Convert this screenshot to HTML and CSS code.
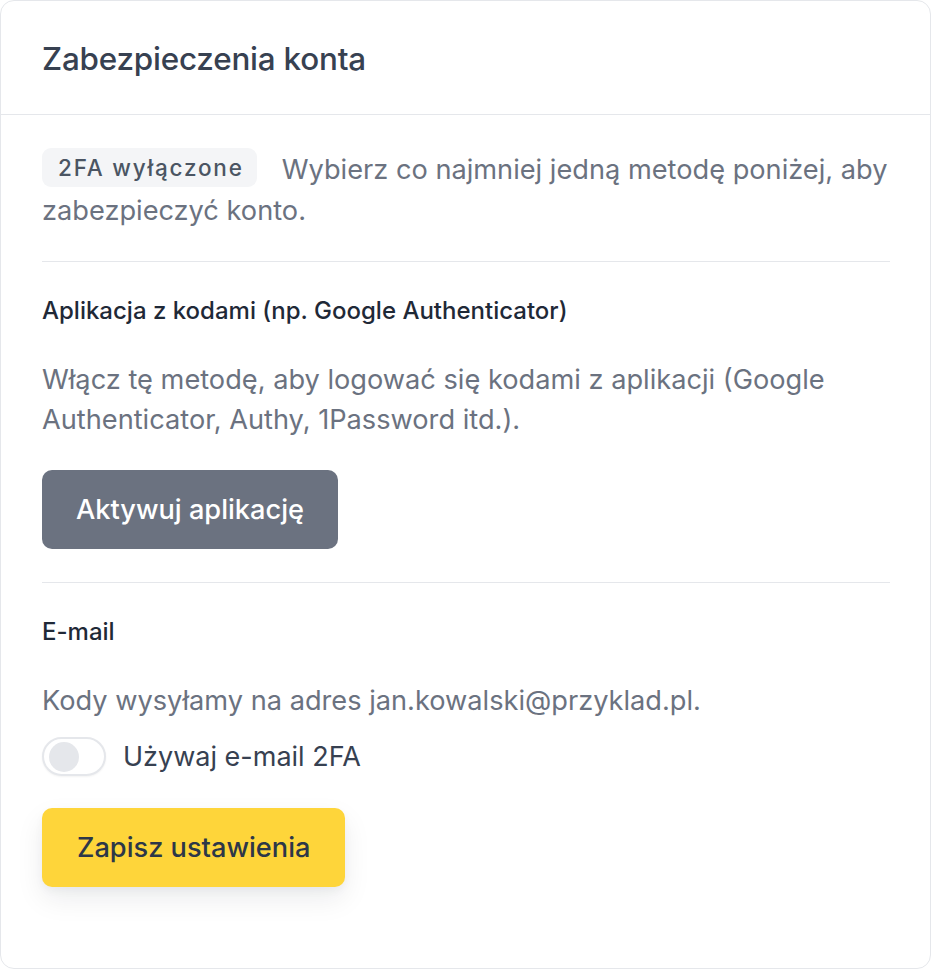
FILE: index.html
```html
<!DOCTYPE html>
<html lang="pl">
<head>
<meta charset="utf-8">
<title>Zabezpieczenia konta</title>
<link rel="stylesheet" href="styles.css">
</head>
<body>
<section class="card">
  <header class="card-header">
    <h1 class="card-title">Zabezpieczenia konta</h1>
  </header>
  <div class="card-body">
    <p class="intro"><span class="badge">2FA wyłączone</span>Wybierz co najmniej jedną metodę poniżej, aby zabezpieczyć konto.</p>

    <div class="method">
      <h2 class="method-title">Aplikacja z kodami (np. Google Authenticator)</h2>
      <p class="method-desc">Włącz tę metodę, aby logować się kodami z aplikacji (Google Authenticator, Authy, 1Password itd.).</p>
      <button class="btn btn-gray" type="button">Aktywuj aplikację</button>
    </div>

    <div class="method">
      <h2 class="method-title">E-mail</h2>
      <p class="method-desc">Kody wysyłamy na adres jan.kowalski@przyklad.pl.</p>
      <label class="toggle-row">
        <span class="toggle"><span class="knob"></span></span>
        <span class="toggle-label">Używaj e-mail 2FA</span>
      </label>
      <button class="btn btn-yellow" type="button">Zapisz ustawienia</button>
    </div>
  </div>
</section>
</body>
</html>
```

FILE: styles.css
```css
* { box-sizing: border-box; }
html, body { margin: 0; padding: 0; background: #ffffff; }
body {
  font-family: Inter, "Noto Sans", "Liberation Sans", sans-serif;
  color: #374151;
}
.card {
  width: 931px;
  height: 969px;
  border: 1px solid #e5e7eb;
  border-radius: 14px;
  background: #ffffff;
}
.card-header {
  height: 114px;
  padding: 0 41px;
  display: flex;
  align-items: center;
  border-bottom: 1px solid #e5e7eb;
}
.card-title {
  margin: 2px 0 0;
  font-size: 31.4px;
  font-weight: 500;
  line-height: 48px;
  color: #374151;
  letter-spacing: -0.2px;
}
.card-body {
  padding: 33px 40px 0 41px;
}
.intro {
  margin: 0;
  font-size: 27.2px;
  line-height: 41px;
  color: #6b7280;
  padding-bottom: 30px;
}
.badge {
  display: inline-block;
  vertical-align: 3px;
  height: 39px;
  line-height: 39px;
  padding: 0 13px 0 16px;
  margin-right: 25px;
  border-radius: 9px;
  background: #f4f5f7;
  color: #4b5563;
  font-size: 22.5px;
  font-weight: 500;
  letter-spacing: 1.8px;
}
.method {
  border-top: 1px solid #e5e7eb;
  padding-top: 31px;
  padding-bottom: 33px;
}
.method-title {
  margin: 0;
  font-size: 24px;
  font-weight: 500;
  line-height: 35px;
  color: #1f2937;
}
.method-desc {
  margin: 32px 0 0;
  font-size: 27.2px;
  line-height: 40px;
  color: #6b7280;
}
.btn {
  display: inline-flex;
  align-items: center;
  justify-content: center;
  height: 79px;
  padding: 0 34px;
  border: 0;
  border-radius: 10px;
  font-family: inherit;
  font-size: 27.2px;
  font-weight: 500;
  cursor: pointer;
}
.btn-gray {
  margin-top: 30px;
  background: #6b7280;
  color: #ffffff;
}
.btn-yellow {
  margin-top: 32px;
  padding: 0 35px;
  background: #fed53a;
  color: #2d3748;
  box-shadow: 0 12px 28px rgba(17, 24, 39, 0.08), 0 4px 8px rgba(17, 24, 39, 0.04);
}
.method-desc + .toggle-row { margin-top: 15px; }
.toggle-row {
  display: flex;
  align-items: center;
  gap: 17px;
  height: 40px;
}
.toggle {
  position: relative;
  width: 64px;
  height: 39px;
  border: 2px solid #e5e7eb;
  border-radius: 20px;
  background: #ffffff;
  box-shadow: 0 1px 2px rgba(0, 0, 0, 0.05);
}
.knob {
  position: absolute;
  left: 5px;
  top: 3.5px;
  width: 30px;
  height: 30px;
  border-radius: 50%;
  background: #e5e7eb;
}
.toggle-label {
  font-size: 27px;
  color: #374151;
}
```
